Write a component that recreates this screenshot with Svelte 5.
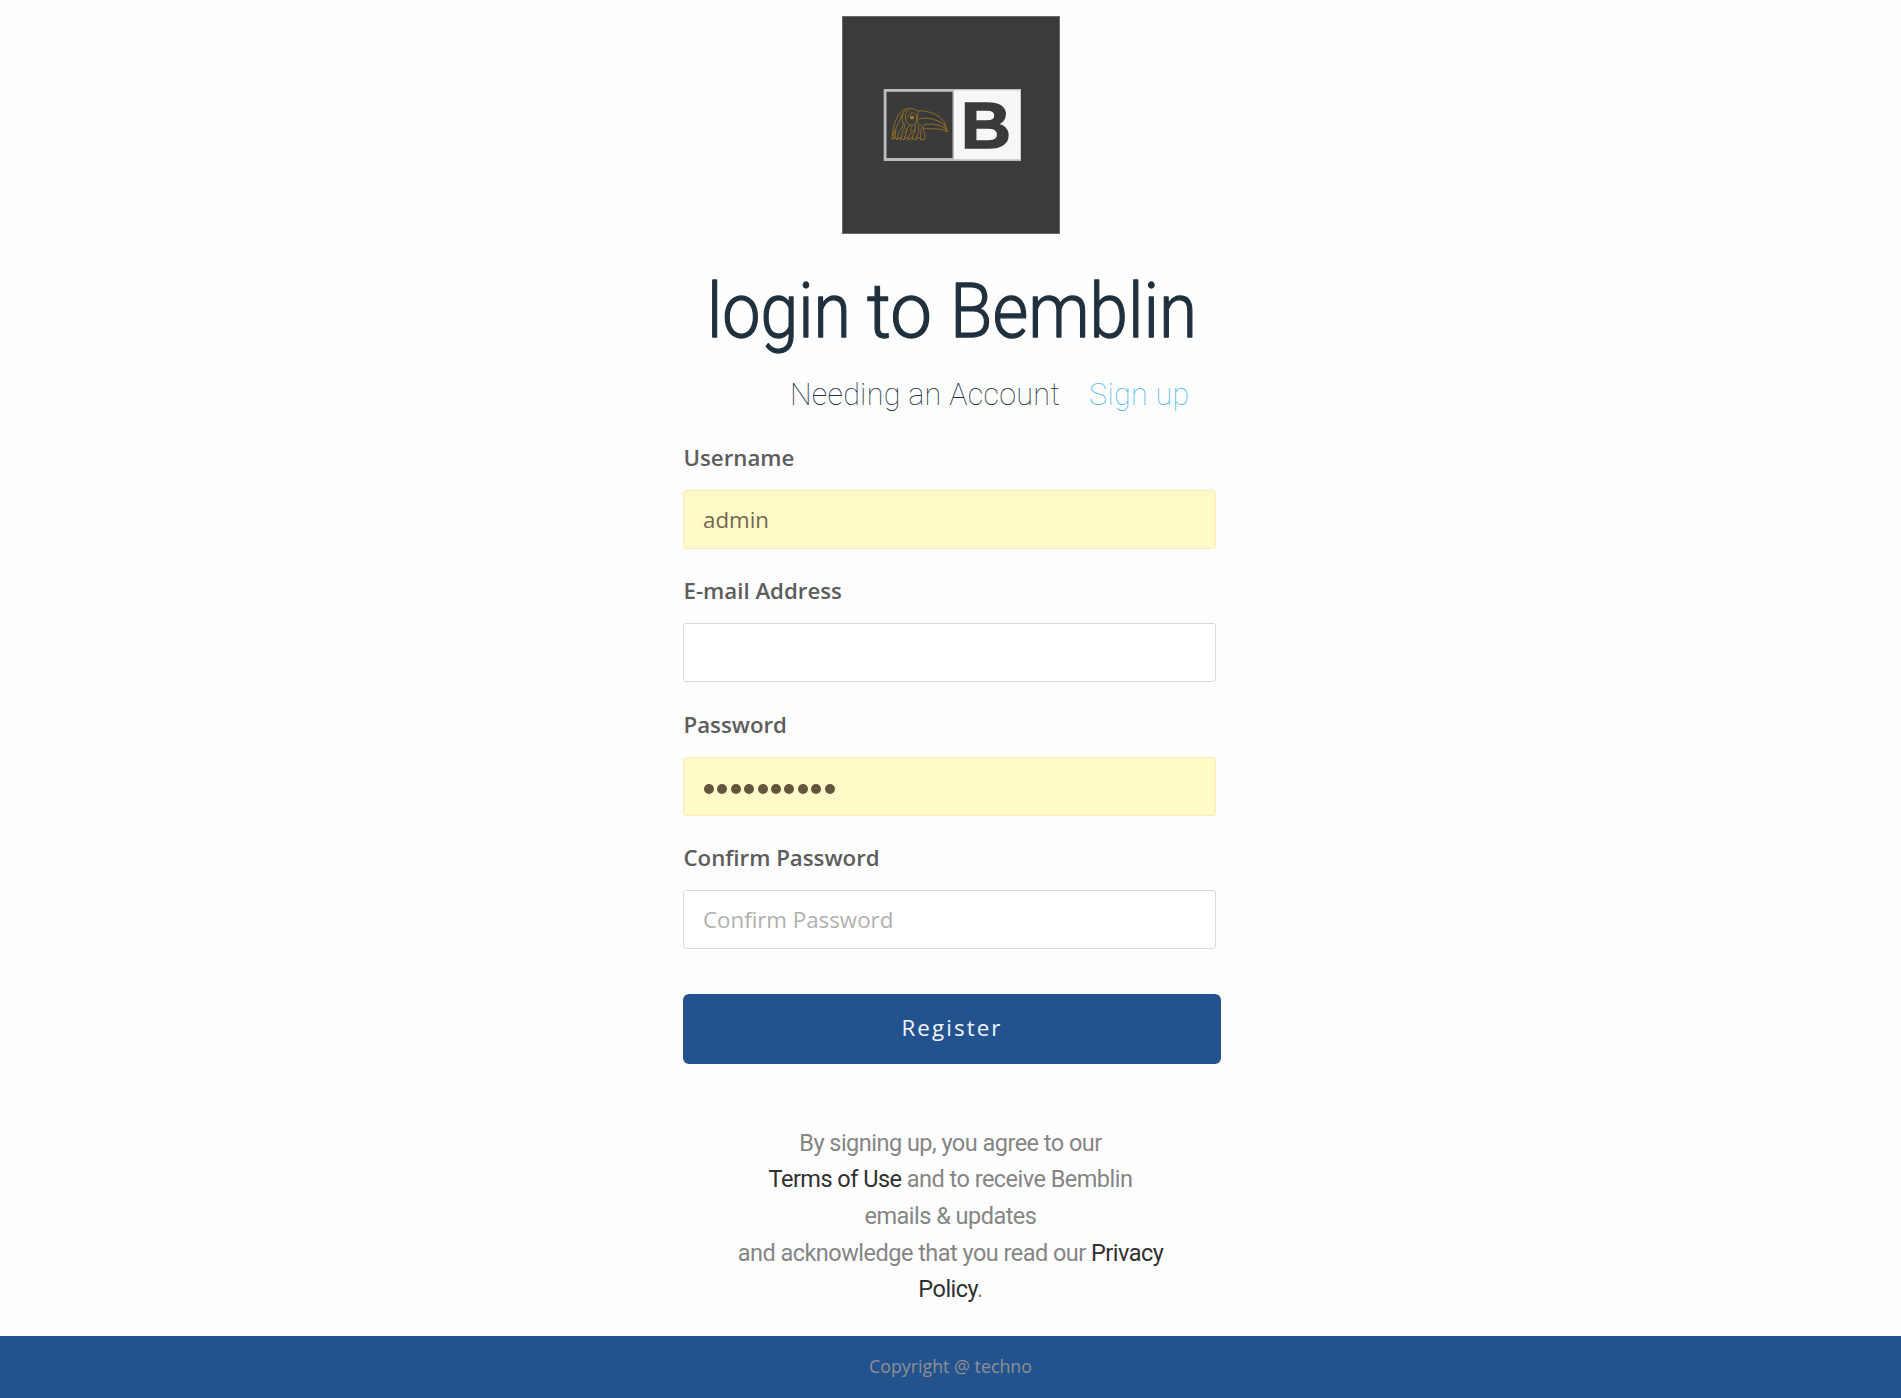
<script lang="ts">
  const fields = [
    { id: 'username', label: 'Username', type: 'text', value: 'admin', placeholder: '', filled: true },
    { id: 'email', label: 'E-mail Address', type: 'text', value: '', placeholder: '', filled: false },
    { id: 'password', label: 'Password', type: 'dots', value: '', placeholder: '', filled: true },
    { id: 'confirm', label: 'Confirm Password', type: 'password', value: '', placeholder: 'Confirm Password', filled: false },
  ];
</script>

<div class="page">
  <main>
    <svg class="logo" viewBox="0 0 218 218" role="img" aria-label="Bemblin">
      <rect width="218" height="218" fill="#3b3b3b" />
      <rect x="0.5" y="0.5" width="217" height="217" fill="none" stroke="#777" stroke-width="0.8" />
      <rect x="41.7" y="73" width="137.3" height="72" fill="#bdbdbd" />
      <rect x="44.5" y="75.8" width="66" height="66.2" fill="#3a3a3a" />
      <rect x="112" y="74.3" width="66.2" height="69" fill="#f7f7f7" />
      <text class="mark" x="119" y="132.3" textLength="50" lengthAdjust="spacingAndGlyphs">B</text>
      <g fill="none" stroke="#8e7026" stroke-width="1" stroke-linecap="round" stroke-linejoin="round">
        <path d="M50 123C51 109 55 93 67 92.5C71 92.3 74 94 76 95C87 94 101 100 103.500 109L105.500 116C98 111 91 114 81 112C79 109 75 107 75 104C76 100 76 97 76 95" />
        <path d="M77 103C87 100 97 105 103 109M81 109C89 107 97 108 104 113M102 110L105 115" />
        <path d="M67 94C62 96 62 106 68 109C73 110 76 105 74 99C71 95 67 97 66 101M80 111C83 115 83 119 83 123" />
        <path d="M64 94C57 99 60 103 56 108C52 113 55 117 52 123M61 98C58 106 64 107 59 113C55 117 57 119 55 123M62 107C65 112 59 115 60 119C60 122 58 122 58 124M67 110C63 114 66 117 63 120L62 124" />
        <path d="M70 110C67 115 71 116 67 120L66 124M74 108C71 112 75 115 71 119L70 124M77 109C75 113 79 116 75 119L74 124M79 113C80 117 77 119 79 124M65 113L63 117M73 113L70 117M53 114L51 120M50 123L53 121L55 124L58 121L61 124L64 121L67 124L70 121L73 124L76 121L79 124L83 123" />
      </g>
      <circle cx="70" cy="101.500" r="2" fill="#a07c22" />
    </svg>

    <h1>
      <svg viewBox="0 -20 500 116" width="500" height="116">
        <g class="title">
          <text x="3" y="67" textLength="144" lengthAdjust="spacingAndGlyphs">login</text>
          <text x="163" y="67" textLength="65" lengthAdjust="spacingAndGlyphs">to</text>
          <text x="246" y="67" textLength="247" lengthAdjust="spacingAndGlyphs">Bemblin</text>
        </g>
      </svg>
    </h1>

    <p class="switch"><span>Needing an Account</span><a href="#signup">Sign up</a></p>

    <form>
      {#each fields as f}
        <div class="field">
          <label for={f.id}>{f.label}</label>
          {#if f.type === 'dots'}
            <div class="input filled dots" id={f.id}>
              {#each Array(10) as _}<i></i>{/each}
            </div>
          {:else}
            <input class="input" class:filled={f.filled} id={f.id} type={f.type} value={f.value} placeholder={f.placeholder} />
          {/if}
        </div>
      {/each}
      <button type="button">Register</button>
    </form>

    <p class="terms">
      <span>By signing up, you agree to our</span>
      <span><a href="#terms">Terms of Use</a> and to receive Bemblin</span>
      <span>emails &amp; updates</span>
      <span>and acknowledge that you read our <a href="#privacy">Privacy</a></span>
      <span><a href="#privacy">Policy</a>.</span>
    </p>
  </main>
  <footer>Copyright @ techno</footer>
</div>

<style>
  :global(body) { margin: 0; background: #fefefe; }
  .page {
    height: 1398px;
    display: flex;
    flex-direction: column;
    overflow: hidden;
    font-family: 'Open Sans', sans-serif;
  }
  main {
    flex: 1;
    display: flex;
    flex-direction: column;
    align-items: center;
    padding-top: 16px;
  }
  .logo { width: 218px; height: 218px; flex: none; }
  .mark { font: bold 65px 'Liberation Sans', sans-serif; fill: #3a3a3a; stroke: #3a3a3a; stroke-width: 1.6px; }
  h1 { margin: 16px 0 0; height: 116px; padding-left: 6px; }
  h1 svg { display: block; overflow: visible; }
  .title {
    font: 300 76px Roboto, sans-serif;
    fill: #20303d;
    stroke: #20303d;
    stroke-width: 1.3px;
    stroke-linejoin: round;
  }
  .switch {
    margin: 3px 0 0;
    height: 51px;
    display: flex;
    justify-content: flex-end;
    width: 478px;
    gap: 29px;
    font: 100 30.5px/51px Roboto, sans-serif;
    letter-spacing: 0.28px;
    color: #20303d;
    white-space: nowrap;
  }
  .switch a { color: #52b9e9; text-decoration: none; }
  form { width: 535px; margin-top: 20px; }
  .field { height: 133.4px; }
  label {
    display: block;
    height: 50px;
    line-height: 35.5px;
    font-size: 22.25px;
    font-weight: 600;
    color: #5c5c5c;
    padding-left: 0.5px;
  }
  .input {
    display: block;
    box-sizing: border-box;
    width: 533px;
    height: 59px;
    padding: 0 19px;
    border: 1.5px solid #d9d9d9;
    border-radius: 3px;
    background: #fff;
    font: 400 22.3px 'Open Sans', sans-serif;
    color: #555;
    outline: none;
  }
  .input::placeholder { color: #b0b0b0; opacity: 1; }
  .filled { background: #fffac8; border-color: #ffe8b8; color: #75674f; }
  .dots { display: flex; align-items: center; gap: 3.4px; padding: 5px 19px 0 20px; }
  .dots i { width: 10px; height: 10px; border-radius: 50%; background: #64553f; }
  button {
    display: block;
    width: 538px;
    height: 70px;
    margin-top: 20px;
    padding: 0 0 2px;
    border: 0;
    border-radius: 6px;
    background: #23538f;
    color: #f2f6fb;
    font: 400 22.3px 'Open Sans', sans-serif;
    letter-spacing: 2.1px;
  }
  .terms {
    margin: 61px 0 0;
    display: flex;
    flex-direction: column;
    align-items: center;
    font: 400 23.5px/36.7px Roboto, sans-serif;
    letter-spacing: -0.52px;
    color: #858585;
    white-space: nowrap;
  }
  .terms a { color: #303030; text-decoration: none; }
  footer {
    height: 62px;
    flex: none;
    background: #23538f;
    color: #8f9092;
    font-size: 17.8px;
    line-height: 61px;
    text-align: center;
  }
</style>
